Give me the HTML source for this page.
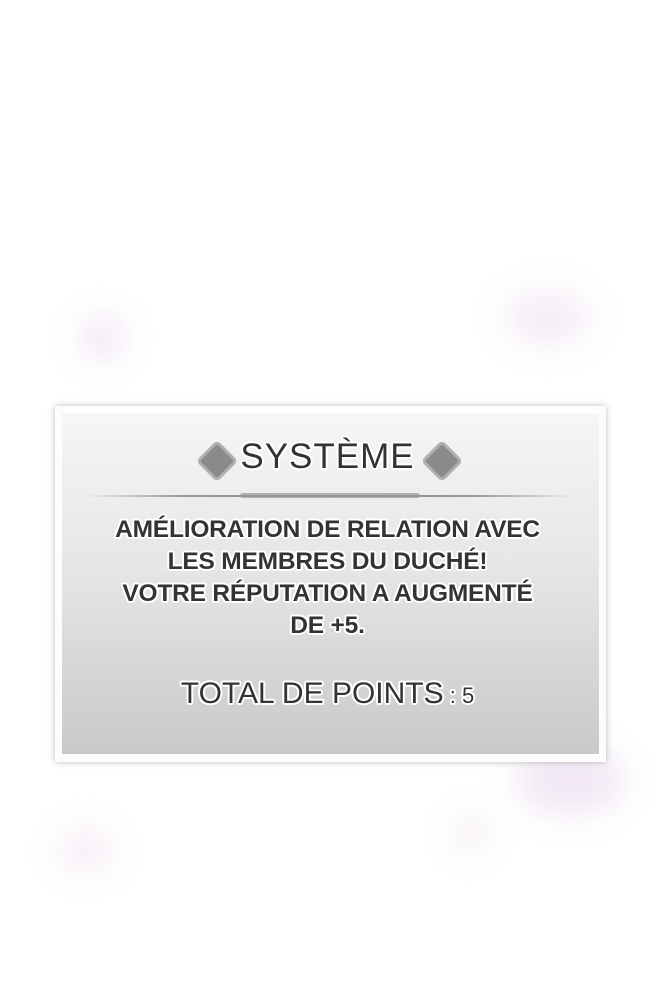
<!DOCTYPE html>
<html><head><meta charset="utf-8"><style>
html,body{margin:0;padding:0}
body{width:655px;height:997px;background:#fff;position:relative;overflow:hidden;font-family:"Liberation Sans",sans-serif}
.blob{position:absolute;border-radius:50%;filter:blur(16px)}
.frame{position:absolute;left:55px;top:406px;width:551px;height:356px;background:#fdfdfd;box-shadow:0 0 6px rgba(120,120,120,.5)}
.inner{position:absolute;left:62px;top:413px;width:537px;height:341px;background:linear-gradient(#f6f6f6 0%,#e6e6e6 45%,#c9c9c9 100%)}
.t{position:absolute;left:0;width:655px;text-align:center;color:#333;
text-shadow:-2px 0 #fff,2px 0 #fff,0 -2px #fff,0 2px #fff,-1.5px -1.5px #fff,1.5px 1.5px #fff,-1.5px 1.5px #fff,1.5px -1.5px #fff}
.b{font-size:24.5px;font-weight:bold;letter-spacing:-0.2px}
.d{position:absolute;width:24px;height:24px;background:#8a8a8a;border:3px solid #b0b0b0;transform:rotate(45deg);border-radius:5px}
</style></head><body>
<div class="blob" style="left:82px;top:318px;width:40px;height:40px;background:#efe3f3"></div>
<div class="blob" style="left:505px;top:290px;width:85px;height:55px;background:#f5edf6"></div>
<div class="blob" style="left:515px;top:745px;width:110px;height:70px;background:#f1e8f4"></div>
<div class="blob" style="left:452px;top:818px;width:35px;height:30px;background:#f3eaf4"></div>
<div class="blob" style="left:58px;top:828px;width:55px;height:45px;background:#f6eef6"></div>
<div class="frame"></div>
<div class="inner"></div>
<div class="d" style="left:202px;top:446px"></div>
<div class="d" style="left:427px;top:446px"></div>
<div class="t" style="top:437px;font-size:35px;letter-spacing:1px">SYSTÈME</div>
<div style="position:absolute;left:85px;top:495px;width:490px;height:2px;background:linear-gradient(90deg,transparent,#999 20%,#888 50%,#999 80%,transparent)"></div>
<div style="position:absolute;left:240px;top:493px;width:180px;height:5px;background:#999;border-radius:3px;opacity:.7"></div>
<div class="t b" style="top:516px">AMÉLIORATION DE RELATION AVEC</div>
<div class="t b" style="top:548px">LES MEMBRES DU DUCHÉ!</div>
<div class="t b" style="top:580px">VOTRE RÉPUTATION A AUGMENTÉ</div>
<div class="t b" style="top:612px">DE +5.</div>
<div class="t" style="top:677px;font-size:30px">TOTAL DE POINTS<span style="font-size:22px"> : 5</span></div>
</body></html>
